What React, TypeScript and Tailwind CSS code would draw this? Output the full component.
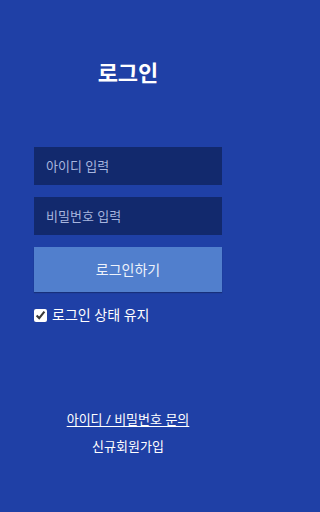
import { useState } from 'react'

export default function App() {
  const [keep, setKeep] = useState(true)

  return (
    <div className="w-full min-h-[512px] bg-[#1f40a6]">
      <div
        className="w-[256px] h-[512px] flex flex-col items-center text-white"
        style={{ fontFamily: '"Noto Sans", "Noto Sans CJK KR", sans-serif' }}
      >
        <h1 className="mt-[56px] text-[22px] leading-[32px] font-bold">로그인</h1>

        <div className="mt-[59px] w-[188px] flex flex-col">
          <input
            type="text"
            placeholder="아이디 입력"
            className="h-[38px] w-full bg-[#12296d] px-3 text-[13px] text-white placeholder:text-[#a7b5de] outline-none"
          />
          <input
            type="password"
            placeholder="비밀번호 입력"
            className="mt-[12px] h-[38px] w-full bg-[#12296d] px-3 text-[13px] text-white placeholder:text-[#a7b5de] outline-none"
          />
          <button className="mt-[12px] h-[45px] w-full bg-[#517fcd] text-[14px] text-[#eef2fb] shadow-[0_1px_1px_rgba(0,0,0,0.25)]">
            로그인하기
          </button>

          <label className="mt-[13px] flex items-center gap-[5px] text-[14px] leading-[20px]">
            <input
              type="checkbox"
              checked={keep}
              onChange={(e) => setKeep(e.target.checked)}
              className="m-0 w-[13px] h-[13px] accent-white"
            />
            로그인 상태 유지
          </label>
        </div>

        <div className="mt-[84px] flex flex-col items-center text-[13px] leading-[20px]">
          <a href="#" className="underline underline-offset-2">아이디 / 비밀번호 문의</a>
          <a href="#" className="mt-[7px]">신규회원가입</a>
        </div>
      </div>
    </div>
  )
}
